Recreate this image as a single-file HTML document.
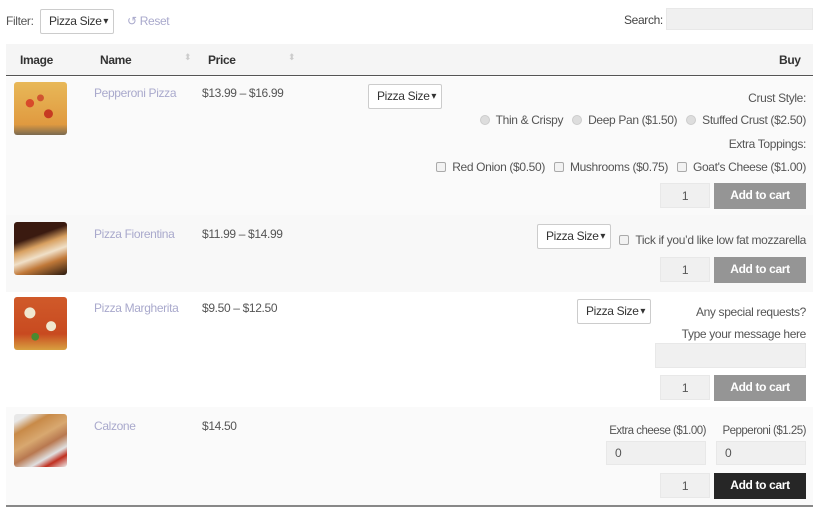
<!DOCTYPE html>
<html><head><meta charset="utf-8"><style>
*{box-sizing:border-box;margin:0;padding:0}
body{width:820px;height:518px;background:#fff;font-family:"Liberation Sans",sans-serif;font-size:12px;color:#555;position:relative;overflow:hidden;letter-spacing:-0.35px}
.a{position:absolute;white-space:nowrap}
.r{position:absolute;white-space:nowrap;text-align:right}
.sel{position:absolute;height:25px;border:1px solid #ccc;border-radius:2px;background:#fff;color:#333;font-size:12px;line-height:23px;padding-left:8px}
.sel:after{content:"▾";position:absolute;right:5px;top:0;font-size:10px}
.inp{position:absolute;background:#f0f0f0;border:1px solid #e8e8e8;color:#555;font-size:12px}
.btn{position:absolute;background:#959595;color:#fff;font-weight:bold;font-size:12px;text-align:center;line-height:25px;height:26px;width:92px}
.row{position:absolute;left:6px;width:807px}
.img{position:absolute;left:14px;width:53px;height:53px;border-radius:3px}
.nm{position:absolute;left:94px;color:#a9a9cc}
.pr{position:absolute;left:202px;color:#555}
.rad{display:inline-block;width:10px;height:10px;border-radius:50%;background:#ddd;border:1px solid #ccc;vertical-align:-1px;margin-right:6px}
.cb{display:inline-block;width:10px;height:10px;background:#f2f2f2;border:1px solid #aaa;border-radius:2px;vertical-align:-1px;margin-right:6px}
</style></head><body>
<div class="a" style="left:6px;top:14px">Filter:</div>
<div class="sel" style="left:40px;top:9px;width:74px">Pizza Size</div>
<div class="a" style="left:127px;top:14px;color:#a9a9cc">↺ Reset</div>
<div class="a" style="left:624px;top:13px;color:#444">Search:</div>
<div class="inp" style="left:666px;top:8px;width:147px;height:22px"></div>

<div class="row" style="top:44px;height:32px;background:#f5f5f5;border-bottom:1px solid #555"></div>
<div class="a" style="left:20px;top:53px;font-weight:bold;color:#333">Image</div>
<div class="a" style="left:100px;top:53px;font-weight:bold;color:#333">Name</div>
<div class="a" style="left:184px;top:52px;color:#ccc;font-size:9px">⬍</div>
<div class="a" style="left:208px;top:53px;font-weight:bold;color:#333">Price</div>
<div class="a" style="left:288px;top:52px;color:#ccc;font-size:9px">⬍</div>
<div class="a" style="left:779px;top:53px;font-weight:bold;color:#333">Buy</div>

<div class="row" style="top:77px;height:138px;background:#fafafa"></div>
<div class="row" style="top:215px;height:77px;background:#f8f8f8"></div>
<div class="row" style="top:292px;height:115px;background:#fff"></div>
<div class="row" style="top:407px;height:100px;background:#fafafa;border-bottom:2px solid #888"></div>

<div class="img" style="top:82px;background:radial-gradient(circle at 30% 40%,#d84a2a 8%,transparent 9%),radial-gradient(circle at 65% 60%,#c63a22 9%,transparent 10%),radial-gradient(circle at 50% 30%,#d05530 7%,transparent 8%),linear-gradient(#e8b858,#e09a40 80%,#7a6a50)"></div>
<div class="nm" style="top:86px">Pepperoni Pizza</div>
<div class="pr" style="top:86px">$13.99 – $16.99</div>
<div class="sel" style="left:368px;top:84px;width:74px">Pizza Size</div>
<div class="r" style="right:14px;top:91px">Crust Style:</div>
<div class="r" style="right:14px;top:113px"><span class="rad"></span>Thin &amp; Crispy &nbsp;&nbsp;<span class="rad"></span>Deep Pan ($1.50) &nbsp;&nbsp;<span class="rad"></span>Stuffed Crust ($2.50)</div>
<div class="r" style="right:14px;top:137px">Extra Toppings:</div>
<div class="r" style="right:14px;top:160px"><span class="cb"></span>Red Onion ($0.50) &nbsp;&nbsp;<span class="cb"></span>Mushrooms ($0.75) &nbsp;&nbsp;<span class="cb"></span>Goat's Cheese ($1.00)</div>
<div class="inp" style="left:660px;top:183px;width:50px;height:25px;text-align:center;line-height:24px">1</div>
<div class="btn" style="left:714px;top:183px">Add to cart</div>

<div class="img" style="top:222px;background:linear-gradient(160deg,#3a1a10 30%,#d8a060 45%,#f0e0c8 60%,#c07838 75%,#2a1a10)"></div>
<div class="nm" style="top:227px">Pizza Fiorentina</div>
<div class="pr" style="top:227px">$11.99 – $14.99</div>
<div class="sel" style="left:537px;top:224px;width:74px">Pizza Size</div>
<div class="r" style="right:14px;top:233px"><span class="cb"></span>Tick if you’d like low fat mozzarella</div>
<div class="inp" style="left:660px;top:257px;width:50px;height:25px;text-align:center;line-height:24px">1</div>
<div class="btn" style="left:714px;top:257px">Add to cart</div>

<div class="img" style="top:297px;background:radial-gradient(circle at 30% 30%,#f0e8d0 10%,transparent 11%),radial-gradient(circle at 70% 55%,#f0e8d0 10%,transparent 11%),radial-gradient(circle at 40% 75%,#4a8a30 7%,transparent 8%),linear-gradient(#d05a2a,#c84a20 70%,#d8a040)"></div>
<div class="nm" style="top:301px">Pizza Margherita</div>
<div class="pr" style="top:301px">$9.50 – $12.50</div>
<div class="sel" style="left:577px;top:299px;width:74px">Pizza Size</div>
<div class="r" style="right:14px;top:305px">Any special requests?</div>
<div class="r" style="right:14px;top:327px">Type your message here</div>
<div class="inp" style="left:655px;top:343px;width:151px;height:25px"></div>
<div class="inp" style="left:660px;top:375px;width:50px;height:25px;text-align:center;line-height:24px">1</div>
<div class="btn" style="left:714px;top:375px">Add to cart</div>

<div class="img" style="top:414px;background:linear-gradient(150deg,#e8e8e8 10%,#c88a48 25%,#d8a870 45%,#b87850 60%,#e0e0e0 75%,#c03020 85%,#eee)"></div>
<div class="nm" style="top:419px">Calzone</div>
<div class="pr" style="top:419px">$14.50</div>
<div class="r" style="right:114px;top:425px;font-size:11.5px;letter-spacing:-0.5px">Extra cheese ($1.00)</div>
<div class="r" style="right:14px;top:425px;font-size:11.5px;letter-spacing:-0.5px">Pepperoni ($1.25)</div>
<div class="inp" style="left:606px;top:441px;width:100px;height:24px;padding-left:8px;line-height:23px">0</div>
<div class="inp" style="left:716px;top:441px;width:90px;height:24px;padding-left:8px;line-height:23px">0</div>
<div class="inp" style="left:660px;top:473px;width:50px;height:25px;text-align:center;line-height:24px">1</div>
<div class="btn" style="left:714px;top:473px;background:#262626">Add to cart</div>
</body></html>
